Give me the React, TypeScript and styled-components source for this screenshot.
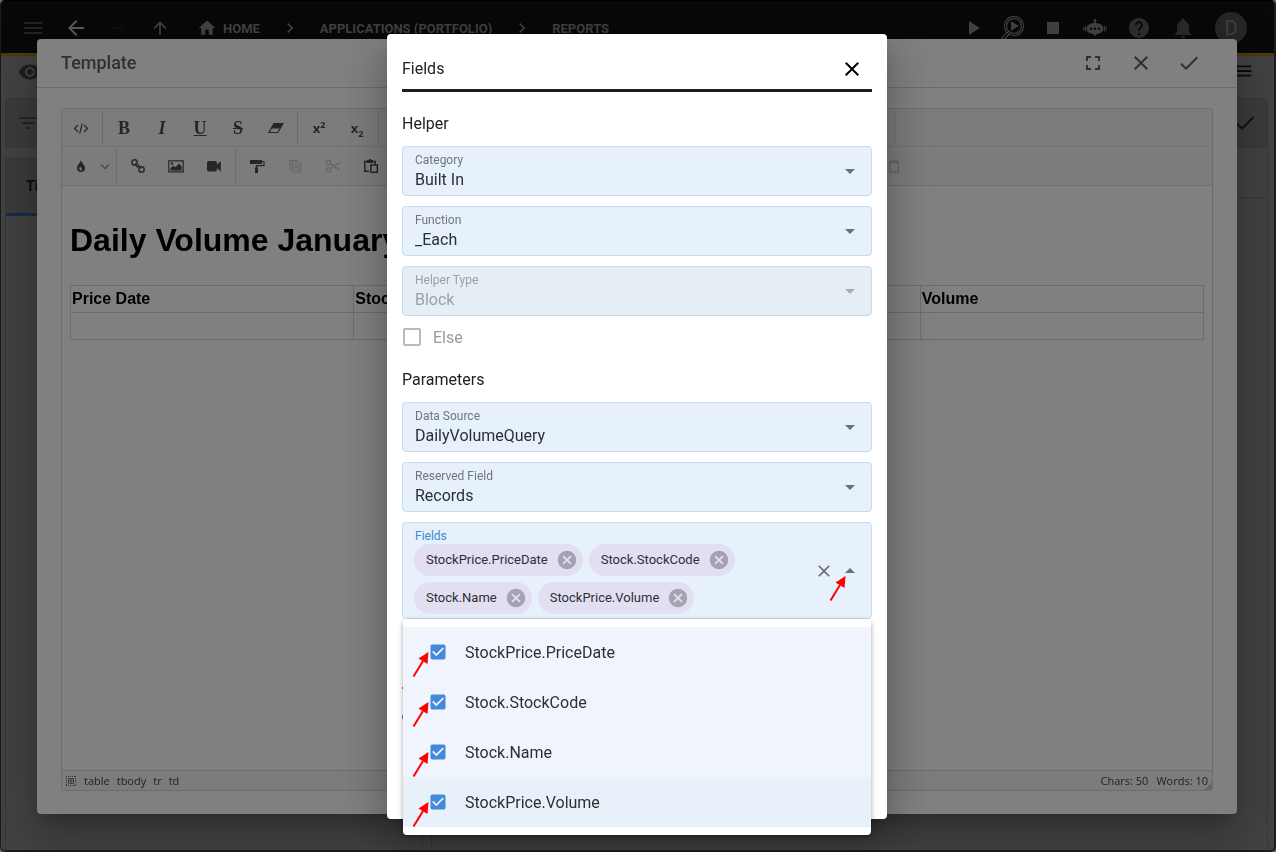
import React, { useState } from 'react';
import styled, { createGlobalStyle } from 'styled-components';
import {
  MdArrowBack, MdArrowDropDown, MdArrowDropUp, MdArrowForward, MdArrowUpward, MdCancel, MdCheck,
  MdCheckBox, MdCheckBoxOutlineBlank, MdChevronRight, MdClose, MdFilterList, MdFullscreen, MdHelp,
  MdHome, MdMenu, MdNotifications, MdPlayArrow, MdStop, MdVisibility,
} from 'react-icons/md';

const GlobalStyle = createGlobalStyle`
  *, *::before, *::after { box-sizing: border-box; }
  body {
    margin: 0;
    background: #6b6b6b;
    color: #212121;
    font-family: Roboto, "Liberation Sans", sans-serif;
    font-size: 16px;
  }
  button, select, input { font: inherit; color: inherit; margin: 0; }
  button { padding: 0; border: 0; background: none; cursor: pointer; }
  svg { display: block; flex: none; }
`;

const elevation = `
  0 11px 15px -7px rgba(0, 0, 0, 0.2),
  0 24px 38px 3px rgba(0, 0, 0, 0.14),
  0 9px 46px 8px rgba(0, 0, 0, 0.12)
`;

/* ---------- Application behind the dialogs ---------- */

const Shell = styled.div`
  display: flex;
  flex-direction: column;
  min-height: 100vh;
  border: 1px solid #1c1c1c;
  border-top-color: #000;
  border-right-width: 2px;
  border-bottom-width: 2px;
  border-radius: 5px;
  background: #424242;
  overflow: hidden;
`;

const TopBar = styled.header`
  display: flex;
  align-items: center;
  justify-content: space-between;
  height: 55px;
  padding: 2px 27px 0 10px;
  border-bottom: 3px solid #4f390a;
  background: #080808;
  color: #424242;
`;

const BarGroup = styled.div`
  display: flex;
  align-items: center;
`;

const BarButton = styled.button<{ $width: number; $tone?: string }>`
  display: flex;
  justify-content: center;
  align-items: center;
  width: ${(p) => p.$width}px;
  height: 40px;
  color: ${(p) => p.$tone ?? '#424242'};
`;

const Crumbs = styled.nav`
  display: flex;
  align-items: center;
  gap: 20px;
  margin-left: 16px;
  font-size: 13px;
  font-weight: 700;
`;

const Crumb = styled.a`
  display: flex;
  align-items: center;
  gap: 6px;
  color: #424242;
  text-decoration: none;
`;

const Avatar = styled.button`
  width: 32px;
  height: 32px;
  margin-left: 10px;
  border-radius: 50%;
  background: #262626;
  color: #3f3f3f;
  font-size: 20px;
`;

const Workspace = styled.main`
  display: flex;
  flex: 1;
  flex-direction: column;
  padding: 0 6px 0 4px;
`;

const PageTools = styled.div`
  display: flex;
  justify-content: space-between;
  height: 42px;
  padding: 4px 14px 0 13px;
  color: #1c1c1c;
`;

const FilterBar = styled.div`
  display: flex;
  align-items: center;
  justify-content: space-between;
  height: 50px;
  padding: 0 10px;
  border: 1px solid #353737;
  border-radius: 4px;
  background: #3a3c3c;
  color: #242626;
`;

const Panels = styled.div`
  display: grid;
  flex: 1;
  grid-template-columns: 1fr 2fr;
  gap: 8px;
`;

const RecordGrid = styled.section`
  margin-top: 10px;
  border: 1px solid #373737;
  border-bottom: 0;
`;

const RecordHeader = styled.div`
  display: flex;
  align-items: center;
  height: 57px;
  padding-left: 20px;
  border-bottom: 3px solid #172c4a;
  background: #3a3c3c;
  color: #0a0a0a;
  font-size: 14px;
  font-weight: 700;
`;

const DetailPanel = styled.section`
  border: 1px solid #373737;
  border-width: 0 1px;
`;

const DetailHeader = styled.div`
  height: 50px;
  border-bottom: 1px solid #363636;
`;

/* ---------- Template dialog ---------- */

const Layer = styled.div`
  position: fixed;
  inset: 1px 2px 0 0;
  display: flex;
  align-items: center;
  justify-content: center;
`;

const TemplateDialog = styled.section`
  display: flex;
  flex-direction: column;
  width: calc(100% - 74px);
  height: calc(100% - 76px);
  border-radius: 4px;
  background: #808080;
  box-shadow: ${elevation};
`;

const TemplateHeader = styled.header`
  display: flex;
  align-items: center;
  justify-content: space-between;
  height: 49px;
  padding: 0 36px 0 24px;
  border-bottom: 1px solid #6c6c6c;
  color: #303030;
`;

const TemplateTitle = styled.h2`
  margin: 0;
  padding-bottom: 2px;
  font-size: 18px;
  font-weight: 500;
`;

const HeaderActions = styled.div`
  display: flex;
  gap: 24px;
`;

const Editor = styled.div`
  display: flex;
  flex: 1;
  flex-direction: column;
  margin: 20px 24px 23px;
  border: 1px solid #6c6c6c;
  border-radius: 3px;
  overflow: hidden;
`;

const ToolRow = styled.div`
  display: flex;
  height: 38px;
  border-bottom: 1px solid #727272;
  background: #7c7c7c;
  color: #262626;

  & + & {
    height: 39px;
    border-bottom-color: #6c6c6c;
  }
`;

const ToolGroup = styled.div`
  display: flex;
  margin: 2px 0;
  padding: 0 2px;
  border-right: 1px solid #6c6c6c;

  &:first-child { padding-left: 0; }
  &:last-child { border-right: 0; }
`;

const ToolGap = styled.div`
  flex: none;
  width: 516px;
  margin: 2px 0;
  border-right: 1px solid #6c6c6c;
`;

const ToolButton = styled.button<{ $narrow?: boolean; $off?: boolean; $push?: boolean }>`
  display: flex;
  align-items: center;
  justify-content: center;
  width: ${(p) => (p.$narrow ? 14 : 38)}px;
  padding-right: ${(p) => (p.$narrow ? 4 : 0)}px;
  margin-left: ${(p) => (p.$push ? 485 : 0)}px;
  color: ${(p) => (p.$off ? '#666' : '#262626')};
`;

const Glyph = styled.span<{ $look?: 'bold' | 'italic' | 'underline' | 'strike' }>`
  padding-top: 2px;
  font-family: "Liberation Serif", serif;
  font-size: 18px;
  font-weight: 700;
  font-style: ${(p) => (p.$look === 'italic' ? 'italic' : 'normal')};
  text-decoration: ${(p) =>
    p.$look === 'underline' ? 'underline' : p.$look === 'strike' ? 'line-through' : 'none'};
`;

const Script = styled.span`
  font-family: "Open Sans", sans-serif;
  font-size: 13px;
  font-weight: 700;

  sup, sub { font-size: 9px; line-height: 0; }
`;

const Page = styled.article`
  flex: 1;
  padding: 9px 8px 8px;
  color: #000;
  font-family: "Liberation Sans", Arial, sans-serif;
  line-height: 24px;

  h1 {
    margin: 21px 0;
    font-size: 32px;
    line-height: 48px;
  }
`;

const DocTable = styled.table`
  width: 100%;
  border-collapse: collapse;
  table-layout: fixed;

  th, td {
    height: 27px;
    padding: 1px;
    border: 1px solid #6c6c6c;
    text-align: left;
  }
`;

const StatusBar = styled.footer`
  display: flex;
  align-items: center;
  gap: 8px;
  height: 20px;
  padding: 0 4px;
  border-top: 1px solid #6c6c6c;
  background: #7c7c7c;
  color: #222;
  font-family: "Open Sans", sans-serif;
  font-size: 11px;
`;

const PathLinks = styled.nav`
  display: flex;
  flex: 1;
  gap: 7px;
`;

const PathLink = styled.a`
  color: inherit;
  text-decoration: none;
`;

const Grip = styled.svg`
  align-self: flex-end;
  margin: 0 -4px 0 -12px;
`;

/* ---------- Fields dialog ---------- */

const FieldsDialog = styled.section`
  width: 500px;
  max-width: 100%;
  height: calc(100% - 66px);
  padding: 15px;
  border-radius: 4px;
  background: #fff;
  box-shadow: ${elevation};
`;

const FieldsHeader = styled.header`
  display: flex;
  align-items: center;
  justify-content: space-between;
  height: 43px;
  padding-right: 8px;
  border-bottom: 3px solid #1f1f1f;

  h2 { margin: 0; padding-bottom: 2px; font-size: 16px; font-weight: 400; }
`;

const SectionTitle = styled.h3`
  margin: 0;
  padding: 20px 0 10px;
  font-size: 16px;
  font-weight: 400;
  line-height: 24px;
`;

const Stack = styled.div`
  display: flex;
  flex-direction: column;
  gap: 10px;
`;

const Box = styled.div<{ $disabled?: boolean }>`
  position: relative;
  border: 1px solid #c8dbee;
  border-radius: 4px;
  background: ${(p) => (p.$disabled ? '#e5edf5' : '#e6f1fc')};
  color: ${(p) => (p.$disabled ? '#9ca1a6' : '#2c2f33')};
`;

const Label = styled.label<{ $tone?: string }>`
  position: absolute;
  top: 5px;
  left: 12px;
  color: ${(p) => p.$tone ?? '#6f757b'};
  font-size: 12px;
  line-height: 16px;
`;

const Select = styled.select`
  display: block;
  width: 100%;
  height: 48px;
  padding: 16px 40px 0 12px;
  border: 0;
  background: none;
  appearance: none;
  opacity: 1;
`;

const Caret = styled.span`
  position: absolute;
  top: 12px;
  right: 9px;
  color: #6b7075;
  pointer-events: none;
`;

const TickLabel = styled.label`
  display: flex;
  align-items: center;
  gap: 9px;
  height: 22px;
  margin-left: -2px;
  color: #9b9b9b;
`;

const Tick = styled.span<{ $tone: string }>`
  display: grid;
  color: ${(p) => p.$tone};

  input, svg { grid-area: 1 / 1; }
  input { width: 100%; height: 100%; appearance: none; }
`;

const ChipBox = styled(Box)`
  display: flex;
  align-items: center;
  height: 97px;
  padding: 16px 9px 0 11px;
`;

const Chips = styled.div`
  display: flex;
  flex: 1;
  flex-wrap: wrap;
  gap: 6px;
`;

const Chip = styled.span`
  display: flex;
  align-items: center;
  gap: 8px;
  height: 32px;
  padding: 0 5px 0 12px;
  border-radius: 16px;
  background: #e3dff2;
  color: #2c2f33;
  font-size: 13px;

  button { color: #a5a2b2; }
`;

const ChipActions = styled.div`
  display: flex;
  align-items: center;
  gap: 4px;
  margin-top: -16px;
  color: #6b7075;
`;

const OptionList = styled.ul`
  position: absolute;
  top: 96px;
  left: 0;
  right: 0;
  z-index: 2;
  margin: 0;
  padding: 8px 0;
  list-style: none;
  border-radius: 4px;
  background: #fff;
  box-shadow: 0 2px 4px rgba(0, 0, 0, 0.25), 0 3px 8px rgba(0, 0, 0, 0.12);
`;

const Option = styled.li<{ $active: boolean }>`
  position: relative;
  background: ${(p) => (p.$active ? '#e8f0fa' : '#f0f5fd')};

  label {
    display: flex;
    align-items: center;
    gap: 17px;
    height: 50px;
    padding-left: 25px;
    color: #2c2f33;
  }
`;

const Pointer = styled.svg<{ $place: 'option' | 'caret' }>`
  position: absolute;
  top: ${(p) => (p.$place === 'option' ? 24 : 52)}px;
  ${(p) => (p.$place === 'option' ? 'left: 9px;' : 'right: 24px;')}
  z-index: 3;
  pointer-events: none;
`;

const Behind = styled.div`
  display: flex;
  flex-direction: column;
  align-items: flex-start;
  gap: 24px;
  padding-top: 68px;
`;

const Rule = styled.span`
  width: 12px;
  height: 2px;
  background: #d9481c;
`;

const AddButton = styled.button`
  width: 24px;
  height: 8px;
  border-radius: 4px;
  background: #4287d6;
`;

/* ---------- Drawings ---------- */

const RedArrow = ({ place }: { place: 'option' | 'caret' }) => (
  <Pointer $place={place} width="18" height="27" viewBox="0 0 18 27" aria-hidden="true">
    <path d="M1.5 25.5 11 10" stroke="#f00" strokeWidth="2" />
    <path d="M16.5 1 15.5 13 6.5 7.5Z" fill="#f00" />
  </Pointer>
);

const InspectRun = () => (
  <svg width="24" height="26" viewBox="0 0 24 26" fill="none" stroke="currentColor">
    <circle cx="13" cy="11" r="9.6" strokeWidth="1.2" />
    <circle cx="13" cy="11" r="7.4" strokeWidth="1.2" />
    <path d="M6 17 .8 23.5l2 1.8L8 19" strokeWidth="1.2" />
    <path d="M10 6.2v9.6l8-4.8z" fill="currentColor" stroke="none" />
  </svg>
);

const Robot = () => (
  <svg width="24" height="24" viewBox="0 0 24 24" fill="currentColor">
    <circle cx="12" cy="4.6" r="1.4" />
    <path
      fillRule="evenodd"
      d="M11.3 5h1.4v2c4.5 .2 7.8 2.3 7.800 5.600 0 3-2.800 5-6.300 5.500L11 20.500v-2.300C6.500 18 3.500 15.800 3.500 12.600 3.500 9.300 6.800 7.200 11.300 7zM8 11.500a1.200 1.200 0 1 0 0 2.400 1.200 1.200 0 0 0 0-2.400zm4 0a1.200 1.200 0 1 0 0 2.400 1.200 1.200 0 0 0 0-2.400zm4 0a1.200 1.200 0 1 0 0 2.400 1.200 1.200 0 0 0 0-2.400z"
    />
    <path d="M2.400 9.500v6M21.600 9.500v6M.8 11v3.500M23.200 11v3.500" stroke="currentColor" strokeWidth="1" />
  </svg>
);

const toolArt: Record<string, React.ReactNode> = {
  source: <path d="M5 5 1.500 8.500 5 12M11 5l3.500 3.500L11 12M9.300 3.500 6.700 13.500" strokeWidth="1.200" />,
  eraser: (
    <>
      <path d="M6 3h9.500L12 8.500H2.800z" fill="currentColor" stroke="none" />
      <path d="M6 3.500h9L9.800 12.500H.9z" strokeWidth="1.200" />
    </>
  ),
  drop: (
    <path
      fill="currentColor"
      stroke="none"
      fillRule="evenodd"
      d="M8 2c.6 3 4 5 4 8a4 4 0 0 1-8 0c0-3 3.400-5 4-8zM7.500 8.500C6.300 9.300 5.800 11 7 12.200c.8.700 1.900.2 1.900-.8 0-1.100-1.200-1.500-1.400-2.900z"
    />
  ),
  link: (
    <>
      <circle cx="4.500" cy="4.500" r="2.700" strokeWidth="1.400" />
      <circle cx="11.500" cy="11.500" r="2.700" strokeWidth="1.400" />
      <path d="M5 5.500 7.500 9l1-1.800 2.500 3.300" strokeWidth="1.400" />
    </>
  ),
  image: (
    <>
      <path d="M.8 2.800h14.400v11H.8z" strokeWidth="1.200" />
      <path d="M2.500 12.500V10l3-2.200 2 1.400L11 5.500l2.700 3v4z" fill="currentColor" stroke="none" />
      <circle cx="4" cy="5.500" r="1.200" fill="currentColor" stroke="none" />
    </>
  ),
  video: (
    <path
      d="M3 3h6a2 2 0 0 1 2 2v1.500L14.800 3v10.500L11 10v1.500a2 2 0 0 1-2 2H3a2 2 0 0 1-2-2V5a2 2 0 0 1 2-2z"
      fill="currentColor"
      stroke="none"
    />
  ),
  brush: (
    <>
      <path d="M1 2h12v4H1z" fill="currentColor" stroke="none" />
      <path d="M13 3.500h2v4.200H7.500V10" strokeWidth="1.200" />
      <path d="M6 9.500h3v5.500H6z" fill="currentColor" stroke="none" />
    </>
  ),
  copy: (
    <>
      <path d="M3 11.500V2.600h7.500" strokeWidth="1.200" />
      <path d="M5.500 5h8v9h-8zM7.200 7.500h4.600M7.200 9.500h4.600M7.200 11.500h4.600" strokeWidth="1.200" />
    </>
  ),
  cut: (
    <>
      <circle cx="3.500" cy="4.500" r="2.200" strokeWidth="1.200" />
      <circle cx="3.500" cy="11.800" r="2.200" strokeWidth="1.200" />
      <path d="m5.400 5.800 9.300 6M5.400 10.500l9.300-6" strokeWidth="1.400" />
    </>
  ),
  paste: (
    <>
      <path d="M6 13.300H1.800V3.500h10.400v3" strokeWidth="1.500" />
      <path d="M4 2h1.500a1.600 1.600 0 0 1 3 0H10v3H4z" fill="currentColor" stroke="none" />
      <path d="M7.800 7h6.500v7.200H7.800z" strokeWidth="1.500" />
    </>
  ),
  trash: <path d="M2.500 4h11M5.800 3.800V2.500h4.400v1.300M4 4.500h8V14H4z" strokeWidth="1.400" />,
  chevron: <path d="m4 6.500 4 4 4-4" strokeWidth="1.400" stroke="#4a4a4a" />,
};

const ToolIcon = ({ name }: { name: string }) => (
  <svg width="16" height="16" viewBox="0 0 16 16" fill="none" stroke="currentColor">
    {toolArt[name]}
  </svg>
);

const Tool = ({ name, ...rest }: { name: string; $narrow?: boolean; $off?: boolean; $push?: boolean }) => (
  <ToolButton type="button" aria-label={name} {...rest}>
    <ToolIcon name={name} />
  </ToolButton>
);

const SelectField = ({ id, label, value, disabled }: { id: string; label: string; value: string; disabled?: boolean }) => (
  <Box $disabled={disabled}>
    <Label htmlFor={id} $tone={disabled ? '#9ca1a6' : undefined}>{label}</Label>
    <Select id={id} disabled={disabled} defaultValue={value}>
      <option>{value}</option>
    </Select>
    <Caret>
      <MdArrowDropDown size={24} color={disabled ? '#a9aeb3' : undefined} />
    </Caret>
  </Box>
);

const options = ['StockPrice.PriceDate', 'Stock.StockCode', 'Stock.Name', 'StockPrice.Volume'];

export default function App() {
  const [picked, setPicked] = useState<string[]>(options);
  const toggle = (name: string) =>
    setPicked((now) =>
      now.includes(name) ? now.filter((n) => n !== name) : options.filter((n) => n === name || now.includes(n)),
    );

  return (
    <>
      <GlobalStyle />
      <Shell>
        <TopBar>
          <BarGroup>
            <BarButton $width={44} $tone="#242424" aria-label="Menu"><MdMenu size={24} /></BarButton>
            <BarButton $width={42} $tone="#5a5a5a" aria-label="Back"><MdArrowBack size={24} /></BarButton>
            <BarButton $width={42} $tone="#0d0d0d" aria-label="Forward"><MdArrowForward size={24} /></BarButton>
            <BarButton $width={42} aria-label="Up"><MdArrowUpward size={20} /></BarButton>
            <Crumbs>
              <Crumb href="#home"><MdHome size={20} />HOME</Crumb>
              <MdChevronRight size={20} />
              <Crumb href="#applications">APPLICATIONS (PORTFOLIO)</Crumb>
              <MdChevronRight size={20} />
              <Crumb href="#reports">REPORTS</Crumb>
            </Crumbs>
          </BarGroup>
          <BarGroup>
            <BarButton $width={40} aria-label="Run"><MdPlayArrow size={24} /></BarButton>
            <BarButton $width={40} aria-label="Inspect"><InspectRun /></BarButton>
            <BarButton $width={40} aria-label="Stop"><MdStop size={24} /></BarButton>
            <BarButton $width={44} aria-label="Assistant"><Robot /></BarButton>
            <BarButton $width={44} $tone="#2e2e2e" aria-label="Help"><MdHelp size={24} /></BarButton>
            <BarButton $width={44} $tone="#2a2a2a" aria-label="Notifications"><MdNotifications size={24} /></BarButton>
            <Avatar type="button">D</Avatar>
          </BarGroup>
        </TopBar>
        <Workspace>
          <PageTools>
            <MdVisibility size={24} />
            <MdMenu size={22} color="#0a0a0a" />
          </PageTools>
          <FilterBar>
            <MdFilterList size={24} />
            <MdCheck size={24} color="#111" />
          </FilterBar>
          <Panels>
            <RecordGrid>
              <RecordHeader>Title</RecordHeader>
            </RecordGrid>
            <DetailPanel>
              <DetailHeader />
            </DetailPanel>
          </Panels>
        </Workspace>
      </Shell>

      <Layer>
        <TemplateDialog aria-label="Template">
          <TemplateHeader>
            <TemplateTitle>Template</TemplateTitle>
            <HeaderActions>
              <button type="button" aria-label="Full screen"><MdFullscreen size={24} /></button>
              <button type="button" aria-label="Close"><MdClose size={24} /></button>
              <button type="button" aria-label="Accept"><MdCheck size={24} /></button>
            </HeaderActions>
          </TemplateHeader>
          <Editor>
            <ToolRow>
              <ToolGroup><Tool name="source" /></ToolGroup>
              <ToolGroup>
                <ToolButton type="button"><Glyph $look="bold">B</Glyph></ToolButton>
                <ToolButton type="button"><Glyph $look="italic">I</Glyph></ToolButton>
                <ToolButton type="button"><Glyph $look="underline">U</Glyph></ToolButton>
                <ToolButton type="button"><Glyph $look="strike">S</Glyph></ToolButton>
                <Tool name="eraser" />
              </ToolGroup>
              <ToolGroup>
                <ToolButton type="button"><Script>x<sup>2</sup></Script></ToolButton>
                <ToolButton type="button"><Script>x<sub>2</sub></Script></ToolButton>
              </ToolGroup>
              <ToolGap />
            </ToolRow>
            <ToolRow>
              <ToolGroup>
                <Tool name="drop" />
                <Tool name="chevron" $narrow />
              </ToolGroup>
              <ToolGroup>
                <Tool name="link" />
                <Tool name="image" />
                <Tool name="video" />
              </ToolGroup>
              <ToolGroup>
                <Tool name="brush" />
                <Tool name="copy" $off />
                <Tool name="cut" $off />
                <Tool name="paste" />
                <Tool name="trash" $off $push />
              </ToolGroup>
            </ToolRow>
            <Page>
              <h1>Daily Volume January</h1>
              <DocTable>
                <tbody>
                  <tr><th>Price Date</th><th>Stock Code</th><th /><th>Volume</th></tr>
                  <tr><td /><td /><td /><td /></tr>
                </tbody>
              </DocTable>
            </Page>
            <StatusBar>
              <svg width="10" height="10" viewBox="0 0 10 10" fill="none" stroke="#333">
                <path d="M.5 0v10M9.500 0v10M0 .5h10M0 9.500h10" strokeDasharray="1 1" />
                <path d="M2.500 2.500h5v5h-5zM5 2.500v5M2.500 5h5" strokeWidth=".8" />
              </svg>
              <PathLinks>
                {['table', 'tbody', 'tr', 'td'].map((tag) => (
                  <PathLink key={tag} href={`#${tag}`}>{tag}</PathLink>
                ))}
              </PathLinks>
              <span>Chars: 50</span>
              <span>Words: 10</span>
              <Grip width="8" height="8" viewBox="0 0 8 8"><path d="M8 0v8H0z" fill="#666" /></Grip>
            </StatusBar>
          </Editor>
        </TemplateDialog>
      </Layer>

      <Layer>
        <FieldsDialog aria-label="Fields">
          <FieldsHeader>
            <h2>Fields</h2>
            <button type="button" aria-label="Close"><MdClose size={24} color="#000" /></button>
          </FieldsHeader>
          <SectionTitle>Helper</SectionTitle>
          <Stack>
            <SelectField id="category" label="Category" value="Built In" />
            <SelectField id="function" label="Function" value="_Each" />
            <SelectField id="helper-type" label="Helper Type" value="Block" disabled />
            <TickLabel>
              <Tick $tone="#b9b9b9">
                <input type="checkbox" disabled />
                <MdCheckBoxOutlineBlank size={24} />
              </Tick>
              Else
            </TickLabel>
          </Stack>
          <SectionTitle>Parameters</SectionTitle>
          <Stack>
            <SelectField id="data-source" label="Data Source" value="DailyVolumeQuery" />
            <SelectField id="reserved-field" label="Reserved Field" value="Records" />
            <ChipBox>
              <Label as="span" $tone="#4287d6">Fields</Label>
              <Chips>
                {picked.map((name) => (
                  <Chip key={name}>
                    {name}
                    <button type="button" aria-label={`Remove ${name}`} onClick={() => toggle(name)}>
                      <MdCancel size={22} />
                    </button>
                  </Chip>
                ))}
              </Chips>
              <ChipActions>
                <button type="button" aria-label="Clear" onClick={() => setPicked([])}><MdClose size={20} /></button>
                <button type="button" aria-label="Close list"><MdArrowDropUp size={24} /></button>
              </ChipActions>
              <RedArrow place="caret" />
              <OptionList>
                {options.map((name, i) => (
                  <Option key={name} $active={i === options.length - 1}>
                    <label>
                      <Tick $tone="#4489db">
                        <input type="checkbox" checked={picked.includes(name)} onChange={() => toggle(name)} />
                        {picked.includes(name) ? <MdCheckBox size={20} /> : <MdCheckBoxOutlineBlank size={20} />}
                      </Tick>
                      {name}
                    </label>
                    <RedArrow place="option" />
                  </Option>
                ))}
              </OptionList>
            </ChipBox>
          </Stack>
          <Behind>
            <Rule />
            <AddButton type="button" aria-label="Add" />
          </Behind>
        </FieldsDialog>
      </Layer>
    </>
  );
}
